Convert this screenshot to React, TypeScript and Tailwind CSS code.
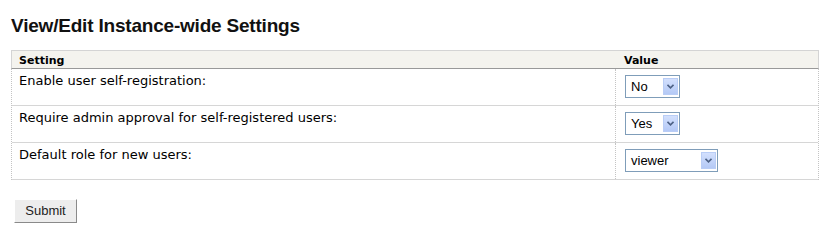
import React from "react";

type Option = { label: string; width: string };

function FakeSelect({ label, width }: Option) {
  return (
    <div
      className={`${width} h-[23px] flex items-center justify-between border border-[#7f9db9] bg-white pl-[5px] pr-[1px]`}
    >
      <span className="text-[13px] leading-[15px] text-black font-['Liberation_Sans',Arial,sans-serif]">
        {label}
      </span>
      <span className="w-[15px] h-[17px] flex items-center justify-center border border-[#b9cdf6] bg-gradient-to-b from-[#d3e0fd] to-[#b4c9f6]">
        <svg width="7" height="5" viewBox="0 0 7 5">
          <polyline points="0.5,0.8 3.5,3.8 6.5,0.8" fill="none" stroke="#4d6185" strokeWidth="1.6" />
        </svg>
      </span>
    </div>
  );
}

const rows = [
  { text: "Enable user self-registration:", value: "No", width: "w-[55px]" },
  { text: "Require admin approval for self-registered users:", value: "Yes", width: "w-[55px]" },
  { text: "Default role for new users:", value: "viewer", width: "w-[93px]" },
];

export default function App() {
  return (
    <div className="w-[825px] h-[230px] bg-white pl-[11px] pt-[15px] font-['DejaVu_Sans',Verdana,sans-serif] text-black">
      <h1 className="text-[19px] leading-[22px] font-bold tracking-[-0.2px] text-[#111] font-['Liberation_Sans',Arial,sans-serif]">
        View/Edit Instance-wide Settings
      </h1>

      {/* Settings table */}
      <div className="mt-[13px] w-[808px]">
        <div className="flex h-[19px] border border-[#d4d4d4] border-b-[#999999] bg-[#f4f3ee] text-[11px] leading-[14px] font-bold pt-[3px]">
          <div className="w-[605px] pl-[7px]">Setting</div>
          <div className="flex-1 pl-[7px]">Value</div>
        </div>
        <div className="border-x border-dotted border-[#c4c4c4]">
          {rows.map((row) => (
            <div key={row.text} className="flex h-[37px] border-b border-solid border-[#d6d6d6]">
              <div className="w-[604px] pl-[7px] pt-[4px] text-[13px] leading-[16px] border-r border-dotted border-[#c4c4c4]">
                {row.text}
              </div>
              <div className="flex-1 pl-[9px] pt-[6px]">
                <FakeSelect label={row.value} width={row.width} />
              </div>
            </div>
          ))}
        </div>
      </div>

      <button className="mt-[19px] ml-[3px] w-[63px] h-[24px] bg-[#ededed] border border-t-white border-l-white border-r-[#8a8a8a] border-b-[#8a8a8a] text-[13px] leading-[16px] text-[#222] font-['Liberation_Sans',Arial,sans-serif]">
        Submit
      </button>
    </div>
  );
}
